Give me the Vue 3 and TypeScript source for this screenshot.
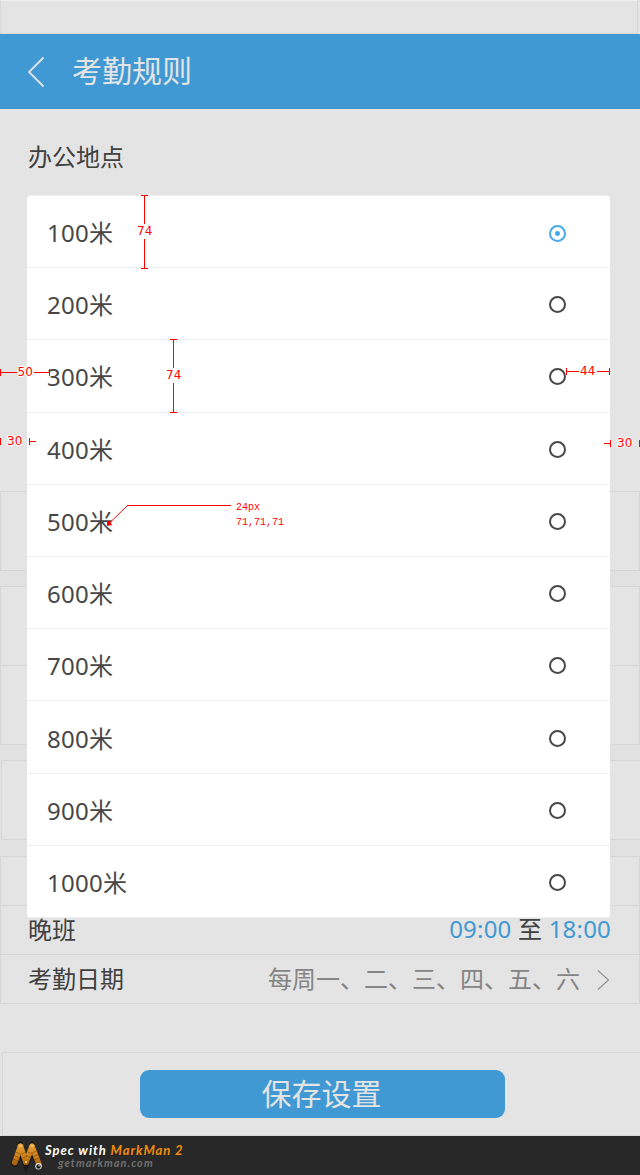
<script setup lang="ts">
interface Option {
  label: string
  size?: 'tall' | 'tall low'
}

const options: Option[] = [
  { label: '100米' },
  { label: '200米' },
  { label: '300米', size: 'tall' },
  { label: '400米' },
  { label: '500米' },
  { label: '600米' },
  { label: '700米' },
  { label: '800米', size: 'tall low' },
  { label: '900米' },
  { label: '1000米' },
]
const selected = 0
</script>

<template>
  <div class="page">
    <div class="status"></div>
    <header class="header">
      <svg class="back" width="18" height="32" viewBox="0 0 18 32"><path d="M15.500 1.5 1 16 15.500 30.5" /></svg>
      <h1>考勤规则</h1>
    </header>

    <main class="content">
      <div class="place">办公地点</div>
      <section class="group single"></section>
      <section class="group double"><div></div><div></div></section>
      <section class="group single inset"></section>
      <section class="group shifts">
        <div class="line"></div>
        <div class="line">
          <span>晚班</span>
          <span class="time"><b>09:00</b> 至 <b>18:00</b></span>
        </div>
        <div class="line">
          <span>考勤日期</span>
          <span class="days">每周一、二、三、四、五、六</span>
          <svg class="more" width="13" height="22" viewBox="0 0 13 22"><path d="M1 1.5 11.5 11 1 20.5" /></svg>
        </div>
      </section>
    </main>

    <div class="actions"><button class="save">保存设置</button></div>

    <footer class="brand">
      <svg class="logo" width="36" height="32" viewBox="0 0 36 32">
        <defs>
          <linearGradient id="worm" gradientUnits="userSpaceOnUse" x1="0" y1="3" x2="0" y2="28">
            <stop offset="0" stop-color="#e9a13a" />
            <stop offset="0.55" stop-color="#c97c15" />
            <stop offset="1" stop-color="#8e4c08" />
          </linearGradient>
        </defs>
        <path class="shade" d="M6 22.500 11.500 7 17 22 23 7 30.500 25.500" />
        <g fill="none" stroke="url(#worm)" stroke-width="5.6" stroke-linecap="round">
          <path d="M5.8 21.5 11.5 5.500" /><path d="M11.5 5.500 17 21" />
          <path d="M17 21 23 5.500" /><path d="M23 5.500 30.500 24.500" />
        </g>
        <path class="rings" d="M4 18l5 2M5.200 14.500l5 2M6.500 11l5 2M18.500 11l5 1.500M17.200 14.500l5 2M22.500 12l5-2M24 15.500l5-2M25.200 19l5-2M12.500 13l4.500-2M13.700 17l4.800-2" />
        <g fill="#ffe0a0"><circle cx="11.5" cy="5" r="1" /><circle cx="23" cy="5" r="1" /><circle cx="17" cy="21" r="1" /></g>
        <circle cx="29.500" cy="25.3" r="3.2" fill="#f3efe8" /><circle cx="29.500" cy="25.500" r="2.200" fill="#171717" /><circle cx="30" cy="24.800" r=".7" fill="#fff" />
      </svg>
      <div class="brand-text">
        <div class="spec">Spec with <em>MarkMan 2</em></div>
        <div class="site">getmarkman.com</div>
      </div>
    </footer>

    <div class="dialog">
      <div v-for="(o, i) in options" :key="o.label" class="option" :class="[o.size, { on: i === selected }]">
        <span>{{ o.label }}</span>
        <i class="radio"></i>
      </div>
    </div>

    <svg class="marks" width="640" height="1175" viewBox="0 0 640 1175">
      <g class="rules">
        <path d="M141 195.5h7M144.5 195v29M144.5 239v29M141 268.5h7" />
        <path d="M170 339.5h7M173.5 339v29M173.5 383v29M170 412.5h7" />
        <path d="M.5 369v7M0 372.5h17M34 372.5h16M49.5 369v7" />
        <path d="M566.5 368v7M566 371.5h13M597 371.5h12M609.5 368v7" />
        <path d="M.5 438v7M29.5 438v7M29 441.5h7" />
        <path d="M604 443.5h6M610.5 440v7M639.5 440v7" />
        <path d="M127 505.5h104" />
        <path d="M127.5 505.5 109 523.5" />
      </g>
      <path d="M107 521h3l2 4-5 1z" fill="#f00" />
      <g class="numbers">
        <text x="137" y="235">74</text>
        <text x="166" y="379">74</text>
        <text x="17.5" y="376">50</text>
        <text x="580" y="375">44</text>
        <text x="7" y="445">30</text>
        <text x="617" y="447">30</text>
      </g>
      <g class="spec-note"><text x="236" y="510">24px</text><text x="236" y="525">71,71,71</text></g>
    </svg>
  </div>
</template>

<style>
body { margin: 0; }
</style>

<style scoped>
.page {
  position: relative;
  box-sizing: border-box;
  width: 640px;
  height: 1175px;
  overflow: hidden;
  background: #e4e4e4;
  color: #404040;
  font-family: "Noto Sans", "Noto Sans CJK SC", sans-serif;
  font-size: 24px;
  font-weight: 400;
}
.status {
  box-sizing: border-box;
  width: 638px;
  height: 34px;
  border: 1px solid #d8d8d8;
  border-top-color: #efefef;
}
.header {
  box-sizing: border-box;
  display: flex;
  height: 75px;
  padding-left: 28px;
  background: #4199d3;
  color: #e4e4e4;
}
.back { margin-top: 22px; fill: none; stroke: #e4e4e4; stroke-width: 1.8; }
h1 { margin: 15px 0 0 26px; font-size: 30px; line-height: 44px; font-weight: 400; }
.content { height: 943px; }
.place { height: 382px; padding-left: 28px; line-height: 96px; }
.group { box-sizing: border-box; border: 1px solid #d6d6d6; margin-bottom: 15px; box-shadow: 0 8px 0 8px #e1e1e1; background: #e4e4e4; position: relative; }
.single { height: 80px; }
.double { height: 159px; }
.double div { box-sizing: border-box; height: 78px; }
.double div + div { border-top: 1px solid #d6d6d6; }
.inset { margin-left: 1px; margin-right: -1px; margin-bottom: 16px; }
.shifts { height: 148px; margin-bottom: 0; box-shadow: none; }
.line { box-sizing: border-box; display: flex; height: 49px; padding: 0 28px 0 27px; line-height: 48px; border-bottom: 1px solid #d6d6d6; }
.line:last-child { border-bottom: 0; }
.time { margin-left: auto; margin-top: -1px; letter-spacing: .2px; }
.time b { color: #4199d3; font-weight: 400; }
.days { margin-left: auto; color: #858585; }
.more { margin: 14px 1px 0 17px; fill: none; stroke: #929292; stroke-width: 1.2; }
.actions {
  box-sizing: border-box;
  height: 84px;
  margin-left: 2px;
  padding: 17px 0 0 137px;
  border: 1px solid #d6d6d6;
  border-right: 0;
}
.save {
  display: block;
  width: 365px;
  height: 48px;
  padding: 0 2px 0 0;
  border: 0;
  border-radius: 9px;
  background: #4199d3;
  color: #e4e4e4;
  font: 400 30px/48px "Noto Sans", "Noto Sans CJK SC", sans-serif;
}
.brand { display: flex; height: 39px; background: #282828; font-family: Lato, sans-serif; font-style: italic; font-weight: 700; }
.logo { flex: none; margin: 5px 0 0 9px; }
.shade { fill: none; stroke: #181818; stroke-width: 7; stroke-linecap: round; }
.rings { fill: none; stroke: #673808; stroke-width: .7; opacity: .65; }
.spec { margin-top: 6px; font-size: 13px; line-height: 16px; color: #fff; letter-spacing: .95px; white-space: nowrap; }
.spec em { color: #f28c0c; }
.site { margin-left: 13px; font-size: 11px; line-height: 10px; color: #707070; letter-spacing: 1.05px; }
.dialog {
  position: absolute;
  left: 27px;
  top: 195px;
  box-sizing: border-box;
  width: 583px;
  border-top: 1px solid #efefef;
  border-radius: 4px;
  background: #fff;
  overflow: hidden;
}
.option {
  box-sizing: border-box;
  display: flex;
  justify-content: space-between;
  height: 72px;
  padding: 0 44px 0 20px;
  border-bottom: 1px solid #eee;
  color: #474747;
  line-height: 73px;
  letter-spacing: .3px;
}
.option.tall { height: 73px; }
.option.low { padding-top: 1px; }
.radio { box-sizing: border-box; width: 17px; height: 17px; margin-top: 28px; border: 2px solid #474747; border-radius: 50%; }
.on .radio { margin-top: 29px; border-color: #46aaea; background: radial-gradient(circle, #46aaea 2px, transparent 3px); }
.marks { position: absolute; left: 0; top: 0; }
.rules { fill: none; stroke: #f00; stroke-width: 1; }
.numbers { font: 400 12px "DejaVu Sans", sans-serif; fill: #f00; stroke: #fff; stroke-width: 2px; paint-order: stroke; }
.spec-note { font: 400 10px "Liberation Mono", monospace; fill: #f00; }
</style>
